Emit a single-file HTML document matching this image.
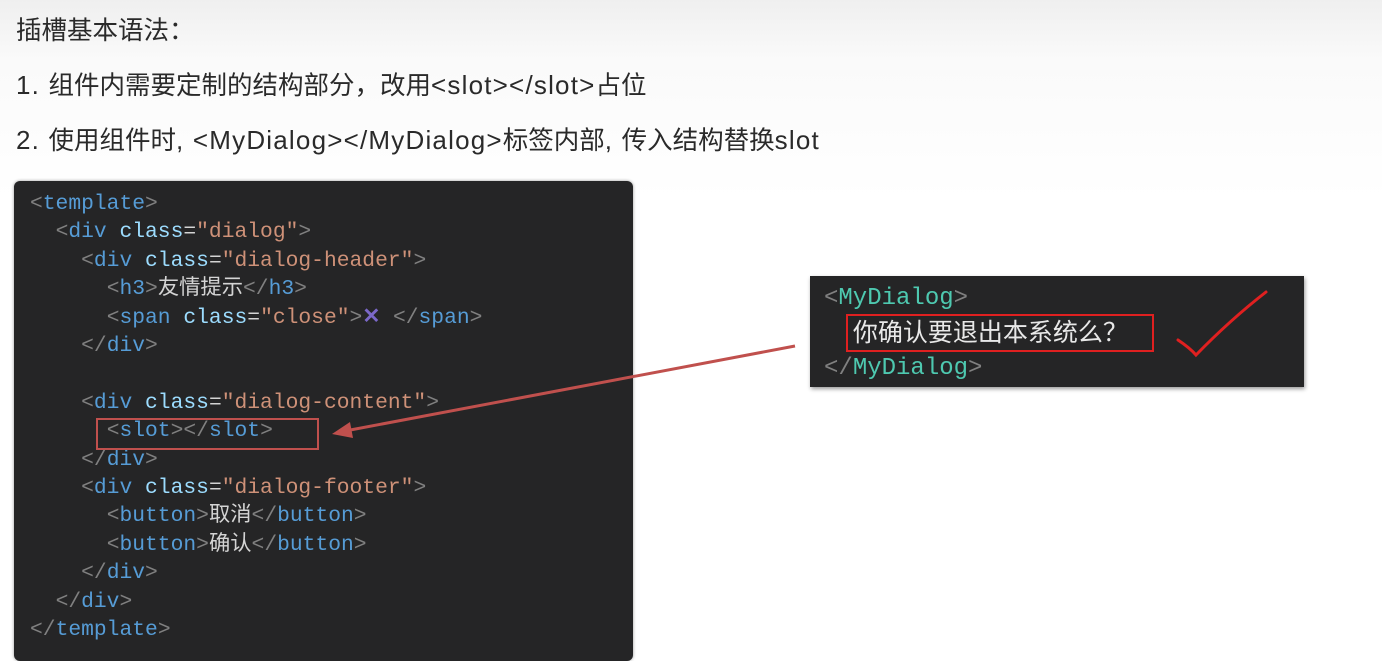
<!DOCTYPE html>
<html style="background:#fff"><head><meta charset="utf-8"><style>
body{margin:0;width:1382px;height:654px;overflow:hidden;background:linear-gradient(#efefef 0,#fafafa 60px,#fff 200px);font-family:"Liberation Sans","Noto Sans CJK SC",sans-serif;position:relative}
.t{position:absolute;left:16px;font-size:25.5px;color:#2a2a2a;line-height:30px;white-space:nowrap}
.t i{font-style:normal;font-size:26px;letter-spacing:1.2px}
.code{position:absolute;left:14px;top:181px;width:619px;height:480px;background:#252526;border-radius:6px;box-shadow:0 0 3px rgba(0,0,0,.4)}
pre{margin:0;font-family:"Liberation Mono","Noto Sans CJK SC",monospace;font-size:21.3px;line-height:28.4px;color:#d4d4d4;position:absolute}
.p{color:#808080}.g{color:#569cd6}.a{color:#9cdcfe}.s{color:#ce9178}.c{color:#4ec9b0}
.box{position:absolute;border:2px solid #c0504d}
</style></head><body>
<div class="t" style="top:16px">插槽基本语法：</div>
<div class="t" style="top:70px"><i>1. </i>组件内需要定制的结构部分，改用<i>&lt;slot&gt;&lt;/slot&gt;</i>占位</div>
<div class="t" style="top:125px"><i>2. </i>使用组件时<i>, &lt;MyDialog&gt;&lt;/MyDialog&gt;</i>标签内部<i>, </i>传入结构替换<i>slot</i></div>
<div class="code"></div>
<pre style="left:30px;top:190px"><span class="p">&lt;</span><span class="g">template</span><span class="p">&gt;</span>
  <span class="p">&lt;</span><span class="g">div</span> <span class="a">class</span>=<span class="s">"dialog"</span><span class="p">&gt;</span>
    <span class="p">&lt;</span><span class="g">div</span> <span class="a">class</span>=<span class="s">"dialog-header"</span><span class="p">&gt;</span>
      <span class="p">&lt;</span><span class="g">h3</span><span class="p">&gt;</span>友情提示<span class="p">&lt;/</span><span class="g">h3</span><span class="p">&gt;</span>
      <span class="p">&lt;</span><span class="g">span</span> <span class="a">class</span>=<span class="s">"close"</span><span class="p">&gt;</span><span style="color:#7b68c8;font-weight:bold">✕</span> <span class="p">&lt;/</span><span class="g">span</span><span class="p">&gt;</span>
    <span class="p">&lt;/</span><span class="g">div</span><span class="p">&gt;</span>

    <span class="p">&lt;</span><span class="g">div</span> <span class="a">class</span>=<span class="s">"dialog-content"</span><span class="p">&gt;</span>
      <span class="p">&lt;</span><span class="g">slot</span><span class="p">&gt;&lt;/</span><span class="g">slot</span><span class="p">&gt;</span>
    <span class="p">&lt;/</span><span class="g">div</span><span class="p">&gt;</span>
    <span class="p">&lt;</span><span class="g">div</span> <span class="a">class</span>=<span class="s">"dialog-footer"</span><span class="p">&gt;</span>
      <span class="p">&lt;</span><span class="g">button</span><span class="p">&gt;</span>取消<span class="p">&lt;/</span><span class="g">button</span><span class="p">&gt;</span>
      <span class="p">&lt;</span><span class="g">button</span><span class="p">&gt;</span>确认<span class="p">&lt;/</span><span class="g">button</span><span class="p">&gt;</span>
    <span class="p">&lt;/</span><span class="g">div</span><span class="p">&gt;</span>
  <span class="p">&lt;/</span><span class="g">div</span><span class="p">&gt;</span>
<span class="p">&lt;/</span><span class="g">template</span><span class="p">&gt;</span></pre>
<div class="box" style="left:96px;top:418px;width:219px;height:28px"></div>
<div style="position:absolute;left:810px;top:276px;width:494px;height:111px;background:#252526;box-shadow:1px 2px 4px rgba(0,0,0,.4)"></div>
<pre style="left:824px;top:282px;line-height:33px;font-size:24px"><span class="p">&lt;</span><span class="c">MyDialog</span><span class="p">&gt;</span>
  <span style="font-family:'Noto Sans CJK SC',sans-serif;color:#e8e8e8;font-size:25px">你确认要退出本系统么？</span>
<span class="p">&lt;/</span><span class="c">MyDialog</span><span class="p">&gt;</span></pre>
<div class="box" style="left:846px;top:314px;width:304px;height:34px;border-color:#e02020"></div>
<svg width="1382" height="654" style="position:absolute;left:0;top:0">
<line x1="795" y1="346" x2="345" y2="431" stroke="#c0504d" stroke-width="3"/>
<polygon points="332,434 350,422 353,438" fill="#c0504d"/>
<path d="M1178,340 Q1190,348 1196,355 Q1230,320 1266,292" stroke="#e02020" stroke-width="3" fill="none" stroke-linecap="round"/>
</svg>
</body></html>
